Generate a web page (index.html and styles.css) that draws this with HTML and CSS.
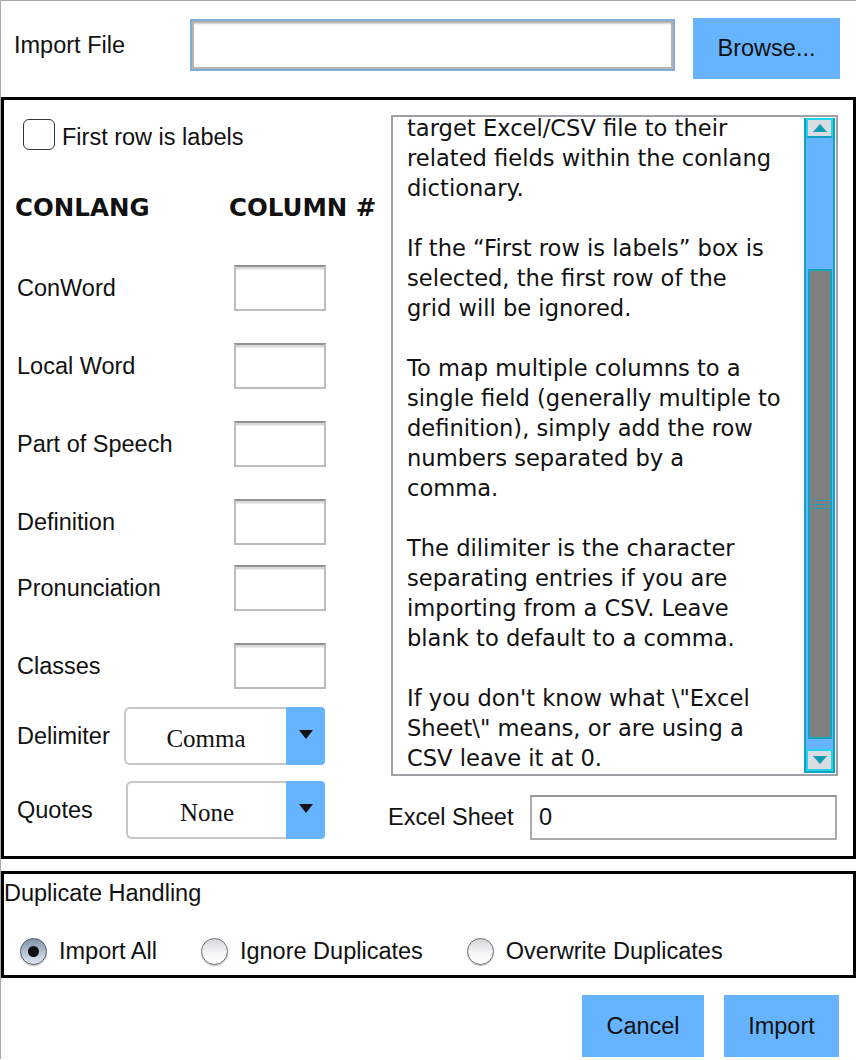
FILE: index.html
```html
<!DOCTYPE html>
<html>
<head>
<meta charset="utf-8">
<link rel="stylesheet" href="styles.css">
</head>
<body>
<div class="window">
  <div class="file-row">
    <span class="file-label">Import File</span>
    <div class="file-input"></div>
    <div class="btn btn-browse">Browse...</div>
  </div>

  <div class="main-panel">
    <div class="left-col">
      <div class="check-row">
        <span class="checkbox"></span>
        <span class="check-label">First row is labels</span>
      </div>
      <div class="head-row">
        <span class="head head-conlang">CONLANG</span>
        <span class="head">COLUMN #</span>
      </div>
      <div class="field-row gap-first"><span class="label">ConWord</span><span class="num-input"></span></div>
      <div class="field-row gap-32"><span class="label">Local Word</span><span class="num-input"></span></div>
      <div class="field-row gap-32"><span class="label">Part of Speech</span><span class="num-input"></span></div>
      <div class="field-row gap-32"><span class="label">Definition</span><span class="num-input"></span></div>
      <div class="field-row gap-20"><span class="label">Pronunciation</span><span class="num-input"></span></div>
      <div class="field-row gap-32"><span class="label">Classes</span><span class="num-input"></span></div>
      <div class="select-row gap-18">
        <span class="label">Delimiter</span>
        <div class="select select-delim">
          <span class="select-text">Comma</span>
          <span class="select-btn"><svg width="14" height="9" viewBox="0 0 14 9"><polygon points="0,0 14,0 7,9" fill="#141414"/></svg></span>
        </div>
      </div>
      <div class="select-row gap-16">
        <span class="label">Quotes</span>
        <div class="select select-quotes">
          <span class="select-text">None</span>
          <span class="select-btn"><svg width="14" height="9" viewBox="0 0 14 9"><polygon points="0,0 14,0 7,9" fill="#141414"/></svg></span>
        </div>
      </div>
    </div>

    <div class="right-col">
      <div class="textarea">
        <div class="text-content">
          <p>target Excel/CSV file to their<br>related fields within the conlang<br>dictionary.</p>
          <p>If the “First row is labels” box is<br>selected, the first row of the<br>grid will be ignored.</p>
          <p>To map multiple columns to a<br>single field (generally multiple to<br>definition), simply add the row<br>numbers separated by a<br>comma.</p>
          <p>The dilimiter is the character<br>separating entries if you are<br>importing from a CSV. Leave<br>blank to default to a comma.</p>
          <p>If you don't know what \"Excel<br>Sheet\" means, or are using a<br>CSV leave it at 0.</p>
        </div>
        <div class="scrollbar">
          <div class="sb-btn sb-up"><svg width="14" height="8" viewBox="0 0 14 8"><polygon points="7,0 14,8 0,8" fill="#0e9cb0"/></svg></div>
          <div class="sb-track">
            <div class="sb-thumb">
              <span class="grip"></span><span class="grip"></span><span class="grip"></span>
            </div>
          </div>
          <div class="sb-btn sb-down"><svg width="14" height="8" viewBox="0 0 14 8"><polygon points="0,0 14,0 7,8" fill="#0e9cb0"/></svg></div>
        </div>
      </div>
      <div class="sheet-row">
        <span class="sheet-label">Excel Sheet</span>
        <div class="sheet-input">0</div>
      </div>
    </div>
  </div>

  <div class="dup-panel">
    <div class="dup-title">Duplicate Handling</div>
    <div class="radio-row">
      <div class="radio-opt"><span class="radio radio-on"><span class="dot"></span></span><span class="radio-label">Import All</span></div>
      <div class="radio-opt"><span class="radio"></span><span class="radio-label">Ignore Duplicates</span></div>
      <div class="radio-opt"><span class="radio"></span><span class="radio-label">Overwrite Duplicates</span></div>
    </div>
  </div>

  <div class="bottom-row">
    <div class="btn btn-cancel">Cancel</div>
    <div class="btn btn-import">Import</div>
  </div>
</div>
</body>
</html>
```

FILE: styles.css
```css
* { box-sizing: border-box; }

html, body {
  margin: 0;
  padding: 0;
  background: #ffffff;
}

body {
  width: 856px;
  height: 1060px;
  overflow: hidden;
  font-family: "Liberation Sans", Arial, sans-serif;
  font-size: 23.5px;
  color: #111111;
}

.window {
  width: 856px;
  height: 1059px;
  border-top: 1px solid #a9a9a9;
  border-left: 1px solid #a9a9a9;
  border-bottom-right-radius: 6px;
  background: #ffffff;
}

/* top row */
.file-row {
  display: flex;
  align-items: flex-start;
  padding-top: 17px;
  padding-left: 13px;
  height: 78px;
}

.file-label {
  width: 176px;
  line-height: 55px;
  white-space: nowrap;
}

.file-input {
  width: 485px;
  height: 52px;
  margin-top: 1px;
  border: 2px solid #84acd9;
  background: #ffffff;
  box-shadow: inset 0 0 0 2px #b4b4b4, inset 0 4px 2px -1px #cfcfcf;
}

.btn {
  background: #66b3ff;
  display: flex;
  align-items: center;
  justify-content: center;
  color: #111111;
  white-space: nowrap;
}

.btn-browse {
  width: 147px;
  height: 61px;
  margin-left: 18px;
}

/* main panel */
.main-panel {
  margin-top: 18px;
  height: 762px;
  border: 3px solid #000000;
  display: flex;
  padding-top: 15px;
}

.left-col {
  width: 322px;
  padding-left: 13px;
  display: flex;
  flex-direction: column;
}

.check-row {
  display: flex;
  align-items: flex-start;
  margin-top: 4px;
  height: 31px;
}

.checkbox {
  width: 32px;
  height: 31px;
  margin-left: 6px;
  border: 1.5px solid #333333;
  border-radius: 6px;
  background: #ffffff;
  flex-shrink: 0;
}

.check-label {
  margin-left: 7px;
  margin-top: 3px;
  line-height: 31px;
  white-space: nowrap;
}

.head-row {
  display: flex;
  margin-top: 43px;
  height: 30px;
  line-height: 30px;
}

.head {
  font-family: "DejaVu Sans", Verdana, sans-serif;
  font-weight: bold;
  font-size: 24.5px;
  white-space: nowrap;
  flex-shrink: 0;
}

.head-conlang {
  width: 214px;
  margin-left: -2px;
}

.field-row {
  display: flex;
  align-items: center;
  justify-content: space-between;
  height: 46px;
}

.gap-first { margin-top: 42px; }
.gap-32 { margin-top: 32px; }
.gap-20 { margin-top: 20px; }
.gap-18 { margin-top: 18px; }
.gap-16 { margin-top: 16px; }

.label {
  white-space: nowrap;
}

.num-input {
  width: 92px;
  height: 46px;
  border: 2px solid #bcbcbc;
  border-top-color: #919191;
  background: #ffffff;
  box-shadow: inset 0 2px 0 #d9d9d9, inset 0 3px 1px #ececec;
}

.select-row {
  display: flex;
  align-items: center;
  justify-content: space-between;
  height: 58px;
  padding-right: 1px;
}

.select {
  display: flex;
  height: 58px;
}

.select-delim { width: 201px; }
.select-quotes { width: 199px; }

.select-text {
  flex: 1;
  display: flex;
  align-items: center;
  justify-content: center;
  padding-top: 6px;
  border: 2px solid #c6c6c6;
  border-right: 0;
  border-radius: 6px 0 0 6px;
  font-family: "Liberation Serif", "Times New Roman", serif;
  font-size: 25px;
  color: #111111;
}

.select-btn {
  width: 39px;
  background: #66b3ff;
  border-radius: 0 4px 4px 0;
  display: flex;
  align-items: center;
  justify-content: center;
  padding-bottom: 4px;
}

.select-btn svg { display: block; }

/* right column */
.right-col {
  margin-left: 62px;
  width: 451px;
  display: flex;
  flex-direction: column;
}

.textarea {
  margin-left: 3px;
  width: 447px;
  height: 661px;
  border: 2px solid #9ea0a6;
  display: flex;
  overflow: hidden;
}

.text-content {
  flex: 1;
  overflow: hidden;
  padding-left: 14px;
  margin-top: -4px;
  font-family: "DejaVu Sans", Verdana, sans-serif;
  font-size: 22.6px;
  line-height: 30px;
  color: #111111;
  white-space: nowrap;
}

.text-content p {
  margin: 0 0 30px 0;
}

.scrollbar {
  width: 31px;
  height: 655px;
  margin-top: 1px;
  margin-right: 1px;
  display: flex;
  flex-direction: column;
  background: #66b3ff;
  border-left: 2px solid #10a2c0;
  border-right: 2px solid #10a2c0;
  border-bottom: 2px solid #10a2c0;
  flex-shrink: 0;
}

.sb-btn {
  display: flex;
  align-items: center;
  justify-content: center;
  background: #d9dce1;
  border: 2px solid #22d3ee;
}

.sb-btn svg { display: block; }

.sb-up {
  height: 20px;
  border-bottom-color: #10a2c0;
}

.sb-down {
  height: 22px;
}

.sb-track {
  flex: 1;
  display: flex;
  flex-direction: column;
}

.sb-thumb {
  margin-top: 131px;
  margin-left: 2px;
  width: 24px;
  height: 470px;
  background: #808080;
  border: 2px solid #10a2c0;
  display: flex;
  flex-direction: column;
  align-items: center;
  justify-content: center;
  gap: 3px;
}

.grip {
  display: block;
  width: 15px;
  height: 1px;
  background: #10a2c0;
}

.sheet-row {
  display: flex;
  align-items: center;
  margin-top: 19px;
  height: 45px;
}

.sheet-label {
  width: 142px;
  white-space: nowrap;
}

.sheet-input {
  width: 307px;
  height: 45px;
  border: 2px solid #ababab;
  border-top-color: #979797;
  padding-left: 7px;
  display: flex;
  align-items: center;
  background: #ffffff;
}

/* duplicate handling */
.dup-panel {
  margin-top: 12px;
  height: 107px;
  border: 3px solid #000000;
}

.dup-title {
  padding-top: 5px;
  line-height: 28px;
  white-space: nowrap;
}

.radio-row {
  display: flex;
  align-items: center;
  margin-top: 31px;
  padding-left: 16px;
  height: 27px;
  gap: 44px;
}

.radio-opt {
  display: flex;
  align-items: center;
}

.radio {
  width: 27px;
  height: 27px;
  border-radius: 50%;
  border: 1px solid #6b6b6b;
  background: linear-gradient(#d4d6d9, #f4f5f6 55%, #ffffff);
  box-shadow: 0 1px 1px rgba(0, 0, 0, 0.25);
  display: flex;
  align-items: center;
  justify-content: center;
  flex-shrink: 0;
}

.radio-on {
  border-color: #4d5866;
  background: linear-gradient(#7f93aa, #b6c5d6 55%, #dfe7ef);
}

.dot {
  width: 11px;
  height: 11px;
  border-radius: 50%;
  background: #0d0d0d;
}

.radio-label {
  margin-left: 12px;
  white-space: nowrap;
}

/* bottom buttons */
.bottom-row {
  display: flex;
  justify-content: flex-end;
  gap: 20px;
  margin-top: 17px;
  padding-right: 17px;
}

.btn-cancel {
  width: 122px;
  height: 62px;
}

.btn-import {
  width: 115px;
  height: 62px;
}
```
